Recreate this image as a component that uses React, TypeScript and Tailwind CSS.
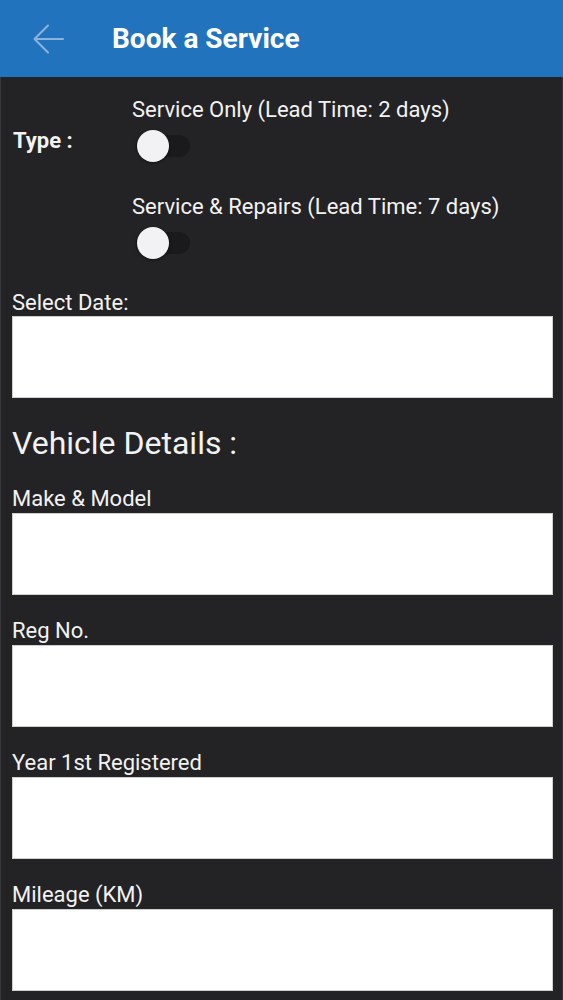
import React from "react";

function Toggle() {
  return (
    <div className="relative mt-[6px] h-[36px] w-[60px]">
      <div className="absolute left-[4px] top-[7px] h-[22px] w-[54px] rounded-full bg-[#1a191b]" />
      <div className="absolute left-[5px] top-[2px] h-[32px] w-[32px] rounded-full bg-[#f2f1f3] shadow-[0_1px_3px_rgba(0,0,0,0.5)]" />
    </div>
  );
}

function Field({ label }: { label: string }) {
  return (
    <div className="mt-[24px] first:mt-0">
      <div className="h-[26px] text-[22px] leading-[24px] text-[#f2f2f2]">{label}</div>
      <div className="h-[82px] border border-[#cfcfcf] bg-white" />
    </div>
  );
}

export default function App() {
  return (
    <div
      className="flex min-h-[1000px] w-[563px] flex-col bg-[#232225]"
      style={{ fontFamily: "Roboto, 'Noto Sans', sans-serif" }}
    >
      <header className="flex h-[77px] items-center bg-[#2273bd]">
        <svg
          className="ml-[33px] h-[30px] w-[31px]"
          viewBox="0 0 31 30"
          fill="none"
          stroke="#8db3da"
          strokeWidth="2"
          strokeLinecap="round"
          strokeLinejoin="round"
        >
          <path d="M30 15H2M15 1.5L1.5 15L15 28.5" />
        </svg>
        <h1 className="ml-[48px] text-[28px] font-bold leading-none text-white">Book a Service</h1>
      </header>

      <div className="flex-1 border-x border-[#363539] pl-[11px] pr-[9px] pb-[7px]">
        <div className="flex pt-[21px]">
          <div className="w-[120px] pl-[1px] pt-[31px] text-[22px] font-bold leading-[24px] text-[#f2f2f2]">
            Type :
          </div>
          <div className="flex flex-col">
            <div className="text-[22px] leading-[24px] text-[#f2f2f2]">Service Only (Lead Time: 2 days)</div>
            <Toggle />
            <div className="mt-[31px] text-[22px] leading-[24px] text-[#f2f2f2]">
              Service &amp; Repairs (Lead Time: 7 days)
            </div>
            <Toggle />
          </div>
        </div>

        <div className="mt-[30px]">
          <div className="h-[25px] text-[22px] leading-[24px] text-[#f2f2f2]">Select Date:</div>
          <div className="h-[82px] border border-[#cfcfcf] bg-white" />
        </div>

        <div className="mt-[27px] text-[32px] leading-[36px] text-[#f2f2f2]">Vehicle Details :</div>

        <div className="mt-[26px] flex flex-col">
          <Field label="Make & Model" />
          <Field label="Reg No." />
          <Field label="Year 1st Registered" />
          <Field label="Mileage (KM)" />
        </div>
      </div>
    </div>
  );
}
